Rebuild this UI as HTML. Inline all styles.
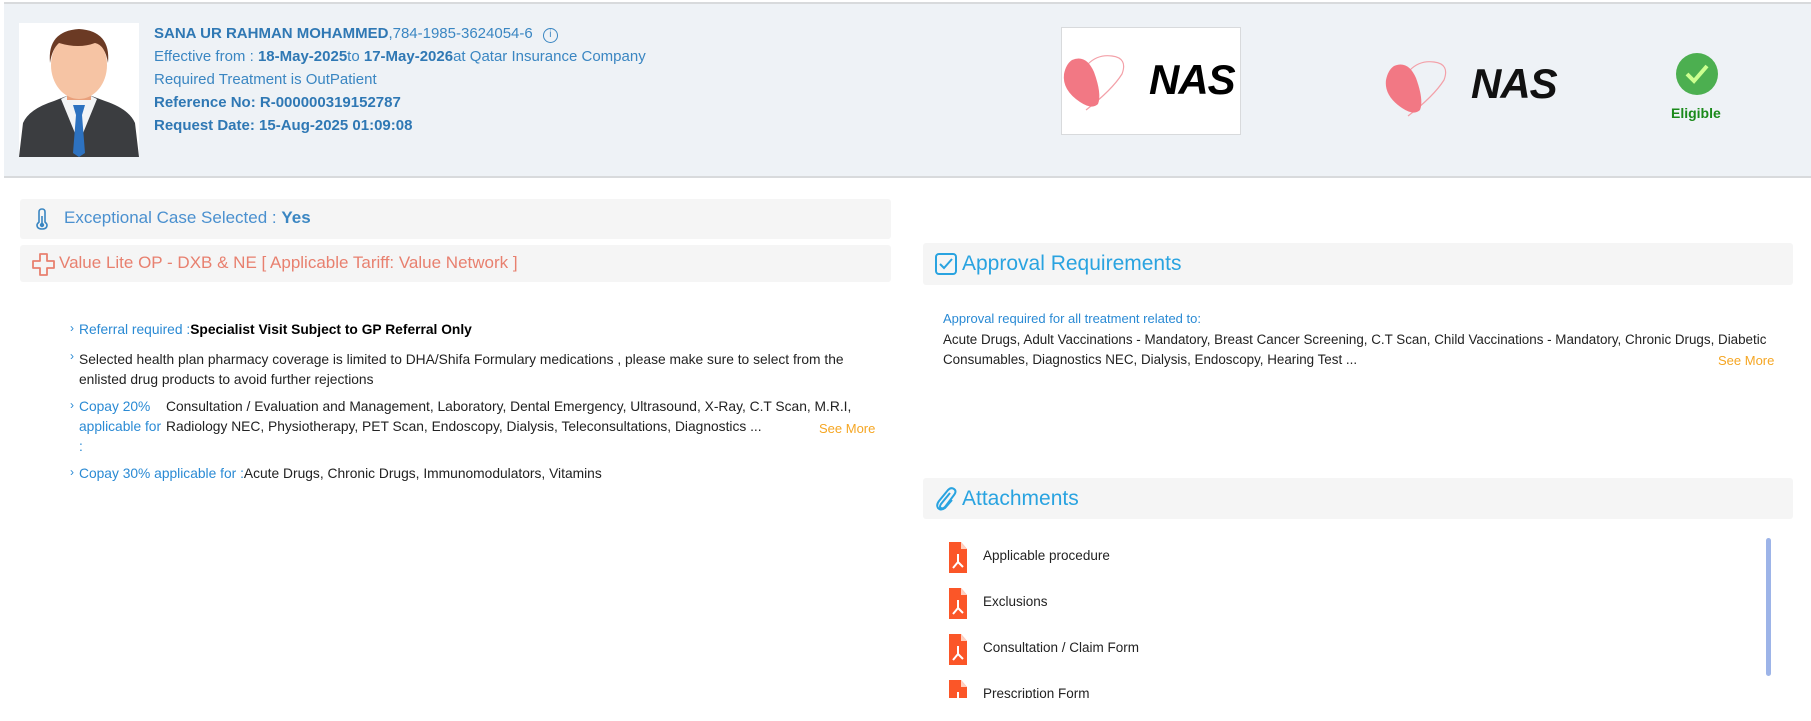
<!DOCTYPE html>
<html><head><meta charset="utf-8"><style>
*{margin:0;padding:0;box-sizing:border-box}
body{width:1811px;height:721px;overflow:hidden;background:#fff;font-family:"Liberation Sans",sans-serif;position:relative}
.a{position:absolute;white-space:nowrap}
.hdr{position:absolute;left:4px;top:2px;width:1807px;height:176px;background:#eef2f6;border-top:2px solid #d8dadc;border-bottom:2px solid #d8dadc}
.ht{color:#3a86c2;font-size:15px}
.ht b{color:#2f78b4;font-weight:600}
.bar{position:absolute;background:#f5f5f5;border-radius:3px}
.li{font-size:13.8px;color:#222}
.bl{color:#2a8ad4}
.sm{color:#f5a623;font-size:13px}
.ar{position:absolute;color:#2a8ad4;font-size:12px}
.pdf{position:absolute;left:949px;width:18px;height:31px}
.at{position:absolute;left:983px;font-size:13.5px;color:#222}
</style></head><body>
<div class="hdr"></div>
<svg class="a" style="left:19px;top:23px" width="120" height="134" viewBox="0 0 120 134">
<rect width="120" height="134" fill="#fff"/>
<path d="M0 134 L4 100 Q10 86 35 78 L50 72 L70 72 L86 78 Q110 86 116 100 L120 134Z" fill="#3b3d40"/>
<path d="M42 76 L60 120 L78 76 L70 72 L50 72Z" fill="#f2f4f6"/>
<path d="M54 82 L66 82 L63 92 L66 130 L60 134 L54 130 L57 92Z" fill="#2d72c0"/>
<rect x="48" y="55" width="24" height="22" fill="#e9a07c"/>
<ellipse cx="60" cy="42" rx="28" ry="34" fill="#f6c4a4"/>
<path d="M31 40 Q28 8 60 6 Q92 8 89 40 Q86 22 76 20 Q60 26 40 20 Q33 26 31 40Z" fill="#6b3a24"/>
</svg>
<div class="a ht" style="left:154px;top:25px"><b>SANA UR RAHMAN MOHAMMED</b>,784-1985-3624054-6 <span style="display:inline-block;width:15px;height:15px;border:1.5px solid #3a86c2;border-radius:50%;font-size:10px;text-align:center;line-height:12px;margin-left:6px;vertical-align:1px">i</span></div>
<div class="a ht" style="left:154px;top:48px">Effective from : <b>18-May-2025</b>to <b>17-May-2026</b>at Qatar Insurance Company</div>
<div class="a ht" style="left:154px;top:71px">Required Treatment is OutPatient</div>
<div class="a ht" style="left:154px;top:94px"><b>Reference No: R-000000319152787</b></div>
<div class="a ht" style="left:154px;top:117px"><b>Request Date: 15-Aug-2025 01:09:08</b></div>

<div class="a" style="left:1061px;top:27px;width:180px;height:108px;background:#fff;border:1px solid #d8dadc"></div>
<svg class="a" style="left:1062px;top:54px" width="70" height="58" viewBox="0 0 70 58"><path d="M24 56 Q50 36 60 20 Q66 4 50 2 Q36 0 26 10" fill="none" stroke="#f3a0a8" stroke-width="1.2"/><path d="M10 6 Q24 0 32 18 Q40 40 36 50 Q30 56 18 48 Q0 36 2 20 Q4 10 10 6Z" fill="#f27884"/></svg>
<div class="a" style="left:1149px;top:56px;font-size:42px;font-weight:bold;font-style:italic;color:#000;letter-spacing:-1px">NAS</div>
<svg class="a" style="left:1384px;top:60px" width="70" height="58" viewBox="0 0 70 58"><path d="M24 56 Q50 36 60 20 Q66 4 50 2 Q36 0 26 10" fill="none" stroke="#f3a0a8" stroke-width="1.2"/><path d="M10 6 Q24 0 32 18 Q40 40 36 50 Q30 56 18 48 Q0 36 2 20 Q4 10 10 6Z" fill="#f27884"/></svg>
<div class="a" style="left:1471px;top:60px;font-size:42px;font-weight:bold;font-style:italic;color:#111;letter-spacing:-1px">NAS</div>
<svg class="a" style="left:1676px;top:53px" width="42" height="42" viewBox="0 0 42 42"><circle cx="21" cy="21" r="21" fill="#4caf50"/><path d="M11 21 L18 28 L31 13" fill="none" stroke="#ccff90" stroke-width="4"/></svg>
<div class="a" style="left:1671px;top:105px;font-size:14px;color:#1a8a1a;font-weight:600">Eligible</div>

<div class="bar" style="left:20px;top:199px;width:871px;height:40px"></div>
<svg class="a" style="left:36px;top:208px" width="12" height="22" viewBox="0 0 12 22"><path d="M3 14 V4 Q3 1 6 1 Q9 1 9 4 V14 Q11 16 11 17 Q11 21 6 21 Q1 21 1 17 Q1 16 3 14Z" fill="none" stroke="#3a86c2" stroke-width="1.6"/><circle cx="6" cy="17" r="2.2" fill="#3a86c2"/><path d="M6 8V16" stroke="#3a86c2" stroke-width="1.6"/></svg>
<div class="a" style="left:64px;top:208px;font-size:17px;color:#4a90cf">Exceptional Case Selected : <b style="color:#3a86c2">Yes</b></div>
<div class="bar" style="left:20px;top:245px;width:871px;height:37px"></div>
<svg class="a" style="left:32px;top:253px" width="23" height="23" viewBox="0 0 23 23"><path d="M8 1H15V8H22V15H15V22H8V15H1V8H8Z" fill="none" stroke="#e8806f" stroke-width="1.8" stroke-linejoin="round"/></svg>
<div class="a" style="left:59px;top:253px;font-size:17px;color:#e8806f">Value Lite OP - DXB &amp; NE [ Applicable Tariff: Value Network ]</div>

<div class="ar" style="left:70px;top:321px">›</div>
<div class="a li" style="left:79px;top:322px"><span class="bl">Referral required :</span><b style="color:#000">Specialist Visit Subject to GP Referral Only</b></div>
<div class="ar" style="left:70px;top:349px">›</div>
<div class="a li" style="left:79px;top:350px;line-height:20px">Selected health plan pharmacy coverage is limited to DHA/Shifa Formulary medications , please make sure to select from the<br>enlisted drug products to avoid further rejections</div>
<div class="ar" style="left:70px;top:398px">›</div>
<div class="a li bl" style="left:79px;top:397px;line-height:20px">Copay 20%<br>applicable for<br>:</div>
<div class="a li" style="left:166px;top:397px;line-height:20px">Consultation / Evaluation and Management, Laboratory, Dental Emergency, Ultrasound, X-Ray, C.T Scan, M.R.I,<br>Radiology NEC, Physiotherapy, PET Scan, Endoscopy, Dialysis, Teleconsultations, Diagnostics ...</div>
<div class="a sm" style="left:819px;top:421px">See More</div>
<div class="ar" style="left:70px;top:465px">›</div>
<div class="a li" style="left:79px;top:466px"><span class="bl">Copay 30% applicable for :</span>Acute Drugs, Chronic Drugs, Immunomodulators, Vitamins</div>

<div class="bar" style="left:923px;top:243px;width:870px;height:42px"></div>
<svg class="a" style="left:935px;top:253px" width="22" height="22" viewBox="0 0 22 22"><rect x="1" y="1" width="20" height="20" rx="3" fill="none" stroke="#29a3e0" stroke-width="2"/><path d="M5 11 L9 15 L17 6" fill="none" stroke="#29a3e0" stroke-width="2"/></svg>
<div class="a" style="left:962px;top:252px;font-size:21px;color:#29a3e0">Approval Requirements</div>
<div class="a" style="left:943px;top:311px;font-size:13px;color:#2a8ad4">Approval required for all treatment related to:</div>
<div class="a li" style="left:943px;top:330px;line-height:20px;font-size:13.4px">Acute Drugs, Adult Vaccinations - Mandatory, Breast Cancer Screening, C.T Scan, Child Vaccinations - Mandatory, Chronic Drugs, Diabetic<br>Consumables, Diagnostics NEC, Dialysis, Endoscopy, Hearing Test ...</div>
<div class="a sm" style="left:1718px;top:353px">See More</div>

<div class="bar" style="left:923px;top:478px;width:870px;height:41px"></div>
<svg class="a" style="left:935px;top:487px" width="22" height="24" viewBox="0 0 22 24"><path d="M15 6 L6 17 Q4 20 6 21 Q8 22 10 20 L19 8 Q22 4 19 2 Q16 0 13 3 L4 14 Q1 18 3 21 Q6 24 10 21 L17 13" fill="none" stroke="#29a3e0" stroke-width="2"/></svg>
<div class="a" style="left:962px;top:487px;font-size:21px;color:#29a3e0">Attachments</div>

<div style="position:absolute;left:0;top:530px;width:1811px;height:168px;overflow:hidden">
<svg class="pdf" style="top:12px" viewBox="0 0 18 31"><path d="M0 0H12L18 7V31H0Z" fill="#fb5628"/><path d="M12 0V7H18" fill="#ffd0c0"/><path d="M9 12V20M9 20L4 26M9 20L14 25" stroke="#fff" stroke-width="2" fill="none"/></svg><div class="at" style="top:18px">Applicable procedure</div>
<svg class="pdf" style="top:58px" viewBox="0 0 18 31"><path d="M0 0H12L18 7V31H0Z" fill="#fb5628"/><path d="M12 0V7H18" fill="#ffd0c0"/><path d="M9 12V20M9 20L4 26M9 20L14 25" stroke="#fff" stroke-width="2" fill="none"/></svg><div class="at" style="top:64px">Exclusions</div>
<svg class="pdf" style="top:104px" viewBox="0 0 18 31"><path d="M0 0H12L18 7V31H0Z" fill="#fb5628"/><path d="M12 0V7H18" fill="#ffd0c0"/><path d="M9 12V20M9 20L4 26M9 20L14 25" stroke="#fff" stroke-width="2" fill="none"/></svg><div class="at" style="top:110px">Consultation / Claim Form</div>
<svg class="pdf" style="top:150px" viewBox="0 0 18 31"><path d="M0 0H12L18 7V31H0Z" fill="#fb5628"/><path d="M12 0V7H18" fill="#ffd0c0"/><path d="M9 12V20M9 20L4 26M9 20L14 25" stroke="#fff" stroke-width="2" fill="none"/></svg><div class="at" style="top:156px">Prescription Form</div>
</div>
<div class="a" style="left:1766px;top:538px;width:5px;height:138px;background:#9db4e8;border-radius:3px"></div>
</body></html>
